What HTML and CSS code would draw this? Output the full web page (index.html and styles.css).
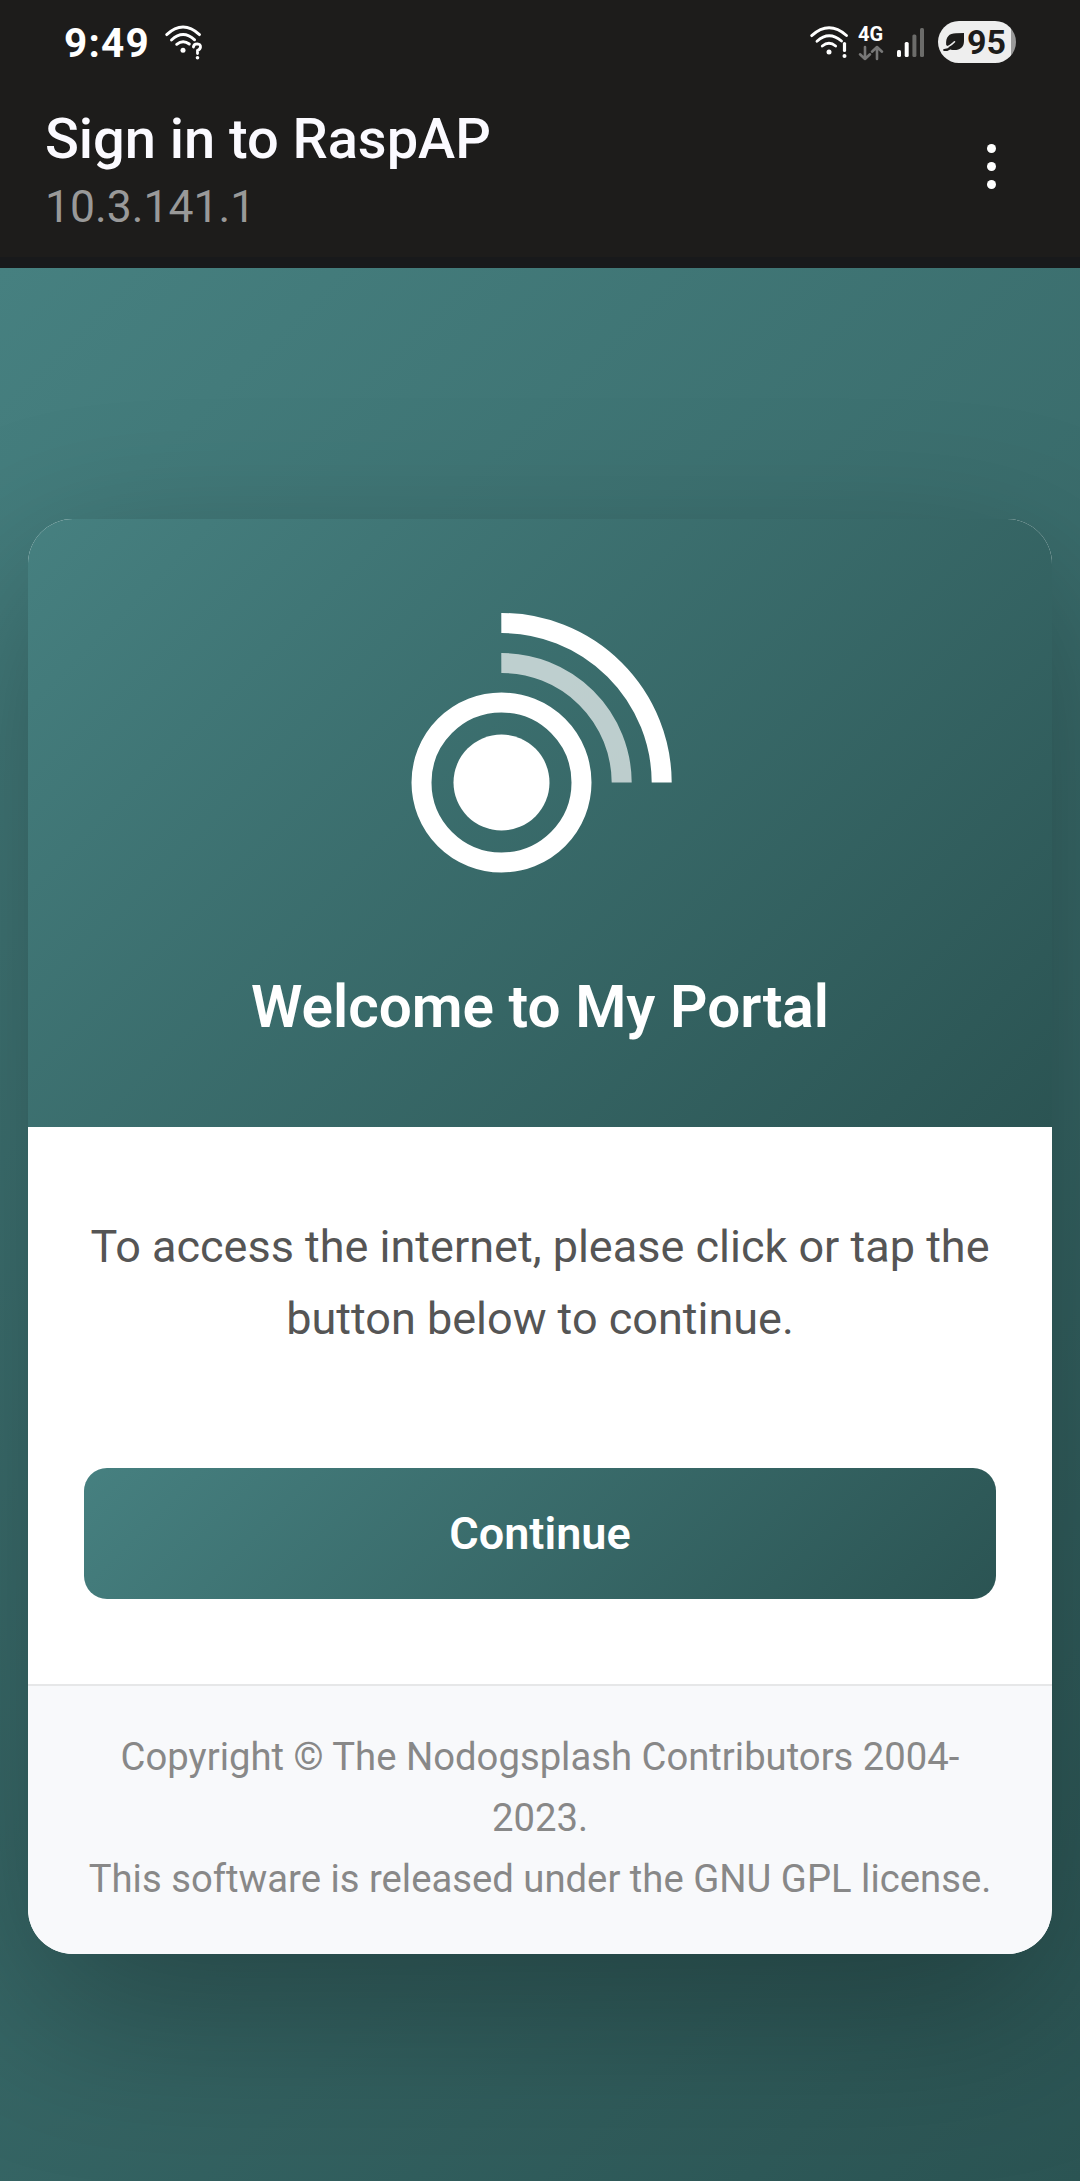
FILE: index.html
```html
<!DOCTYPE html>
<html lang="en">
<head>
<meta charset="utf-8">
<title>Sign in to RaspAP</title>
<link rel="stylesheet" href="styles.css">
</head>
<body>
<div class="screen">
  <div class="status-bar">
    <div class="status-left">
      <span class="clock">9:49</span>
      <svg class="wifi-query" width="38" height="36" viewBox="0 0 38 36" fill="none" stroke="#fff" stroke-width="2.9" stroke-linecap="round">
        <path d="M1.7 9.6Q18 -5.500 34.500 9.600M6.500 15Q18 4.300 29.600 14.800M11.700 19.300Q18 14.200 24.300 19"/>
        <circle cx="18" cy="25.300" r="2.500" fill="#fff" stroke="none"/>
        <path d="M28.400 22Q28.700 18.800 32.300 18.800Q35.700 19 35.500 22Q35.200 24.300 32.500 25.500V28.500" stroke-width="2.800"/>
        <circle cx="32.500" cy="32.700" r="1.800" fill="#fff" stroke="none"/>
      </svg>
    </div>
    <div class="status-right">
      <svg class="wifi-alert" width="39" height="34" viewBox="0 0 39 34" fill="none" stroke="#fff" stroke-width="2.900" stroke-linecap="round">
        <path d="M1.700 9.600Q19 -6 36.500 9.500M7 15.200Q19 4.300 31.500 15M12.300 20Q19 14.500 25.600 20"/>
        <circle cx="19" cy="26" r="2.500" fill="#fff" stroke="none"/>
        <path d="M34.500 17.500V24.500" stroke-width="3.200"/>
        <circle cx="34.500" cy="30" r="2" fill="#fff" stroke="none"/>
      </svg>
      <div class="network">
        <span class="network-type">4G</span>
        <svg width="26" height="16" viewBox="0 0 26 16" fill="none" stroke="#777" stroke-width="2.600" stroke-linecap="round" stroke-linejoin="round">
          <path d="M7 2V14M2 9.300L7 14L12 9.300M19 14V2M14 6.700L19 2L24 6.700"/>
        </svg>
      </div>
      <svg class="signal" width="28" height="30" viewBox="0 0 28 30">
        <rect x="0" y="22" width="4" height="7" rx="1.500" fill="#fff"/>
        <rect x="7.700" y="14" width="4" height="15" rx="1.500" fill="#fff"/>
        <rect x="15.400" y="6.500" width="4" height="22.500" rx="1.500" fill="#6c6c6a"/>
        <rect x="23" y="0" width="4" height="29" rx="1.500" fill="#6c6c6a"/>
      </svg>
      <div class="battery">
        <svg width="22" height="20" viewBox="0 0 22 20">
          <path d="M3.200 13C2.500 5 6 1.200 13 1.200L21 1V9C21 16 16 19 8 17.800Z" fill="#1d1c1b"/>
          <path d="M1 15.700Q6.500 15 11.500 9.800" fill="none" stroke="#eee" stroke-width="1.600" stroke-linecap="round"/>
          <path d="M1.200 18Q5 18 8.500 15.500" fill="none" stroke="#1d1c1b" stroke-width="2.200" stroke-linecap="round"/>
        </svg>
        <span>95</span>
      </div>
    </div>
  </div>
  <header class="app-bar">
    <div>
      <h1>Sign in to RaspAP</h1>
      <div class="address">10.3.141.1</div>
    </div>
    <div class="menu"><i></i><i></i><i></i></div>
  </header>
  <main class="portal">
    <section class="card">
      <div class="card-header">
        <svg class="logo" width="262" height="262" viewBox="0 0 262 262" fill="none" stroke="#fff" stroke-width="20">
          <circle cx="92.500" cy="169.500" r="80"/>
          <circle cx="92.500" cy="169.500" r="48" fill="#fff" stroke="none"/>
          <path d="M92.300 50A120 120 0 0 1 212.700 169.500" opacity=".67"/>
          <path d="M92.300 10A160 160 0 0 1 252.700 169.500"/>
        </svg>
        <h2>Welcome to My Portal</h2>
      </div>
      <div class="card-body">
        <p>To access the internet, please click or tap the button below to continue.</p>
        <button type="button">Continue</button>
      </div>
      <footer>Copyright © The Nodogsplash Contributors 2004-2023.<br>This software is released under the GNU GPL license.</footer>
    </section>
  </main>
</div>
</body>
</html>
```
FILE: styles.css
```css
* { box-sizing: border-box; }
body {
  margin: 0;
  font-family: Roboto, "Liberation Sans", sans-serif;
  background: #1d1c1b;
}
.screen {
  width: 1080px;
  height: 2181px;
  display: flex;
  flex-direction: column;
  overflow: hidden;
}
svg { display: block; flex: none; overflow: visible; }
.status-bar {
  height: 90px;
  padding: 0 64px;
  display: flex;
  justify-content: space-between;
  color: #fff;
}
.status-left, .status-right { display: flex; align-items: flex-start; }
.clock {
  font-size: 40.500px;
  line-height: 48px;
  font-weight: 700;
  padding-top: 19px;
  letter-spacing: 1.2px;
}
.wifi-query { margin: 25px 0 0 15px; }
.wifi-alert { margin: 26px 9px 0 0; }
.network {
  width: 27px;
  margin: 24px 12px 0 0;
}
.network-type {
  display: block;
  height: 21px;
  font-size: 20px;
  line-height: 21px;
  font-weight: 700;
}
.signal { margin: 28px 13px 0 0; }
.battery {
  width: 78px;
  height: 42px;
  margin-top: 21px;
  padding-left: 5px;
  border-radius: 21px;
  display: flex;
  align-items: center;
  gap: 2px;
  background: linear-gradient(90deg, #eee 73px, #999 73px);
  color: #1d1c1b;
  font-size: 34px;
  font-weight: 700;
}
.app-bar {
  height: 178px;
  padding: 15px 84px 0 45px;
  border-bottom: 11px solid #18191b;
  display: flex;
  justify-content: space-between;
}
h1 {
  margin: 0;
  font-size: 56px;
  line-height: 68px;
  font-weight: 500;
  letter-spacing: -.05px;
  color: #fbfaff;
}
.address {
  font-size: 44.500px;
  line-height: 68px;
  color: #999;
}
.menu {
  display: flex;
  flex-direction: column;
  gap: 9px;
  padding-top: 39px;
}
.menu i {
  width: 9px;
  height: 9px;
  border-radius: 50%;
  background: #fff;
}
.portal {
  flex: 1;
  padding: 251px 28px 0;
  background: linear-gradient(135deg, #468080 0%, #2b5453 100%);
  overflow: hidden;
}
.card {
  height: 1435px;
  border-radius: 45px;
  background: #fff;
  overflow: hidden;
  box-shadow: 0 56px 169px rgba(0, 0, 0, .3);
}
.card-header {
  height: 608px;
  padding-top: 94px;
  background: linear-gradient(135deg, #468080 0%, #2b5453 100%);
  text-align: center;
}
.logo { margin: 0 auto; }
h2 {
  margin: 96px 0 0;
  font-size: 58.500px;
  line-height: 72px;
  font-weight: 600;
  color: #fff;
}
.card-body {
  height: 557px;
  padding: 84px 56px 0;
  text-align: center;
}
p {
  margin: 0 0 113px;
  font-size: 45px;
  line-height: 72px;
  color: #555;
}
button {
  display: block;
  width: 100%;
  height: 131px;
  border: 0;
  border-radius: 23px;
  background: linear-gradient(135deg, #468080 0%, #2b5453 100%);
  color: #fff;
  font: 600 45px/53px Roboto, sans-serif;
}
footer {
  height: 270px;
  padding: 41px 56px 0;
  border-top: 2px solid #e6e7e8;
  background: #f8f9fb;
  color: #888;
  font-size: 38.250px;
  line-height: 61px;
  text-align: center;
}
```
